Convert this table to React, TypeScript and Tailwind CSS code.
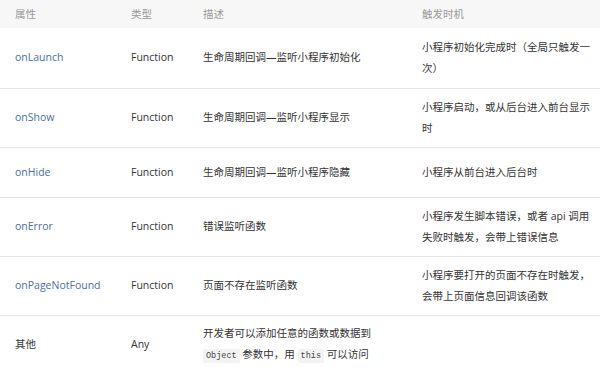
import React from "react";

type Row = {
  name: string;
  link: boolean;
  type: string;
  desc: React.ReactNode;
  when: React.ReactNode;
  h: string;
};

const Code = ({ children }: { children: React.ReactNode }) => (
  <code className="inline-block rounded-[2px] bg-[#f3f3f3] px-[3px] font-['Liberation_Mono',monospace] text-[8.5px] leading-[14px] text-[#444]">
    {children}
  </code>
);

const rows: Row[] = [
  {
    name: "onLaunch",
    link: true,
    type: "Function",
    desc: "生命周期回调—监听小程序初始化",
    when: "小程序初始化完成时（全局只触发一次）",
    h: "h-[60px]",
  },
  {
    name: "onShow",
    link: true,
    type: "Function",
    desc: "生命周期回调—监听小程序显示",
    when: "小程序启动，或从后台进入前台显示时",
    h: "h-[59px]",
  },
  {
    name: "onHide",
    link: true,
    type: "Function",
    desc: "生命周期回调—监听小程序隐藏",
    when: "小程序从前台进入后台时",
    h: "h-[50px]",
  },
  {
    name: "onError",
    link: true,
    type: "Function",
    desc: "错误监听函数",
    when: "小程序发生脚本错误，或者 api 调用失败时触发，会带上错误信息",
    h: "h-[59px]",
  },
  {
    name: "onPageNotFound",
    link: true,
    type: "Function",
    desc: "页面不存在监听函数",
    when: "小程序要打开的页面不存在时触发，会带上页面信息回调该函数",
    h: "h-[59px]",
  },
  {
    name: "其他",
    link: false,
    type: "Any",
    desc: (
      <>
        开发者可以添加任意的函数或数据到 <Code>Object</Code> 参数中，用 <Code>this</Code> 可以访问
      </>
    ),
    when: "",
    h: "h-[58px]",
  },
];

export default function App() {
  return (
    <div className="h-[372px] w-[600px] overflow-hidden bg-white font-['Open_Sans','Noto_Sans_CJK_SC',sans-serif] text-[10.5px] leading-[21px] text-[#333]">
      <table className="w-full table-fixed border-collapse">
        <colgroup>
          <col className="w-[116px]" />
          <col className="w-[72px]" />
          <col className="w-[219px]" />
          <col className="w-[193px]" />
        </colgroup>
        <thead>
          <tr className="h-[28px] bg-[#f7f7f7] text-left text-[#9a9a9a]">
            <th className="pl-[15px] font-normal">属性</th>
            <th className="pl-[15px] font-normal">类型</th>
            <th className="pl-[15px] font-normal">描述</th>
            <th className="pl-[15px] font-normal">触发时机</th>
          </tr>
        </thead>
        <tbody>
          {rows.map((r, i) => (
            <tr key={r.name} className={`${r.h} ${i < rows.length - 1 ? "border-b border-[#e6e6e6]" : ""}`}>
              <td className={`pl-[15px] ${r.link ? "text-[#4a6ea4]" : ""}`}>{r.name}</td>
              <td className="pl-[15px]">{r.type}</td>
              <td className="pl-[15px] pr-[27px]">{r.desc}</td>
              <td className="pl-[15px] pr-[6px]">{r.when}</td>
            </tr>
          ))}
        </tbody>
      </table>
    </div>
  );
}
